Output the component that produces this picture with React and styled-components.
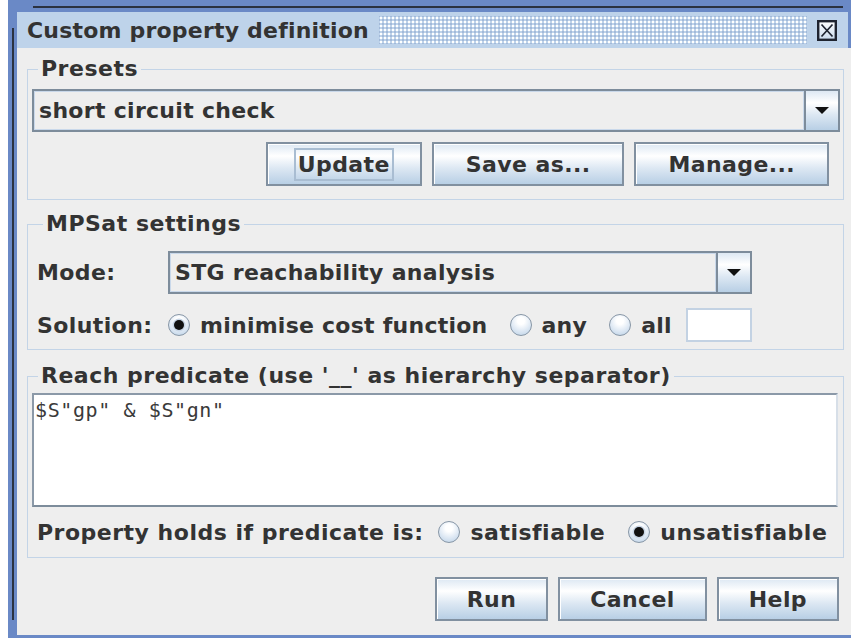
import React from 'react';
import styled, { createGlobalStyle } from 'styled-components';

const GlobalStyle = createGlobalStyle`
  html, body {
    margin: 0;
    padding: 0;
    background: #ffffff;
    overflow: hidden;
  }
  body {
    font-family: "DejaVu Sans", "Liberation Sans", sans-serif;
    color: #333333;
  }
`;

const Desk = styled.div`
  width: 851px;
  height: 638px;
  padding-left: 8px;
  box-sizing: border-box;
  overflow: hidden;
`;

// internal frame with the Metal style blue border and its dark inner lines
const Frame = styled.div`
  position: relative;
  height: 100%;
  box-sizing: border-box;
  padding: 12px 0 3px 9px;
  background: #6a89c6;
  display: flex;
  flex-direction: column;

  &::before {
    content: '';
    position: absolute;
    left: 25px;
    right: 8px;
    top: 6px;
    height: 2px;
    background: #2b3240;
  }
  &::after {
    content: '';
    position: absolute;
    left: 4px;
    top: 28px;
    bottom: 18px;
    width: 2px;
    background: #2b3240;
  }
`;

const TitleBar = styled.div`
  height: 36px;
  margin-right: 3px;
  background: #bed3ea;
  display: flex;
  align-items: center;
  padding: 0 11px 0 10px;
`;

const Title = styled.span`
  font-weight: bold;
  font-size: 22px;
  letter-spacing: 0.2px;
  white-space: nowrap;
`;

const Bumps = styled.div`
  flex: 1;
  height: 28px;
  margin: 0 10px;
  background-image:
    radial-gradient(circle, #ffffff 0.8px, transparent 1.3px),
    radial-gradient(circle, #a2b9d9 0.8px, transparent 1.3px);
  background-size: 4px 4px, 4px 4px;
  background-position: 0 0, 2px 2px;
`;

const CloseButton = styled.svg`
  width: 20px;
  height: 21px;
  flex: none;
`;

const Content = styled.div`
  flex: 1;
  background: #eeeeee;
  padding: 9px 7px 0 10px;
  display: flex;
  flex-direction: column;
`;

const Group = styled.fieldset`
  margin: ${(p) => p.$top || 0}px 0 0 0;
  border: 1px solid #c3d4e7;
  padding: ${(p) => p.$pad};
  min-width: 0;
`;

const Legend = styled.legend`
  font-weight: bold;
  font-size: 22px;
  line-height: 24px;
  letter-spacing: 0.5px;
  padding: 0 3px;
  margin-left: 6px;
`;

const Combo = styled.div`
  display: flex;
  height: 43px;
  width: ${(p) => p.$width || 'auto'};
  box-sizing: border-box;
  border: 2px solid #7d8c9b;
  background: #eeeeee;
`;

const ComboValue = styled.div`
  flex: 1;
  display: flex;
  align-items: center;
  padding-left: 4px;
  border: 1px solid #c9d8ea;
  font-weight: bold;
  font-size: 22px;
  letter-spacing: 0.3px;
`;

const ArrowButton = styled.div`
  width: 32px;
  display: flex;
  align-items: center;
  justify-content: center;
  border-left: 2px solid #7d8c9b;
  background: linear-gradient(#dde8f3 0%, #ffffff 30%, #dde8f3 60%, #b8cfe5 100%);

  &::after {
    content: '';
    border-left: 7px solid transparent;
    border-right: 7px solid transparent;
    border-top: 7px solid #111111;
  }
`;

const ButtonRow = styled.div`
  display: flex;
  justify-content: flex-end;
  gap: 10px;
  margin: ${(p) => p.$margin};
`;

const Button = styled.button`
  height: 44px;
  padding: 0 ${(p) => p.$pad || 30}px;
  border: 2px solid #8190a0;
  box-shadow: inset 1px 1px 0 #ffffff;
  background: linear-gradient(#dde8f3 0%, #ffffff 30%, #dde8f3 60%, #b8cfe5 100%);
  font-family: "DejaVu Sans", sans-serif;
  font-weight: bold;
  font-size: 22px;
  letter-spacing: 0.4px;
  color: #333333;
  display: flex;
  align-items: center;
  justify-content: center;
`;

const FocusRing = styled.span`
  padding: 2px 2px;
  outline: 2px solid #a9bdd2;
  outline-offset: 0;
`;

const SettingsGrid = styled.div`
  display: grid;
  grid-template-columns: 131px 584px;
  row-gap: 14px;
  align-items: center;
`;

const Label = styled.span`
  font-weight: bold;
  font-size: 22px;
  letter-spacing: ${(p) => p.$spacing || 0.4}px;
  white-space: nowrap;
`;

const OptionLine = styled.div`
  display: flex;
  align-items: center;
  height: 34px;
  gap: ${(p) => p.$gap || 22}px;
  margin: ${(p) => p.$margin || 0};
`;

const Radio = styled.label`
  display: flex;
  align-items: center;
  gap: 10px;
  font-weight: bold;
  font-size: 22px;
  letter-spacing: ${(p) => p.$spacing || 0.4}px;
  white-space: nowrap;
  margin-left: ${(p) => p.$shift || 0}px;
`;

const RadioMark = styled.span`
  width: 22px;
  height: 22px;
  box-sizing: border-box;
  border-radius: 50%;
  border: 1.5px solid #8796a6;
  background: radial-gradient(circle at 50% 30%, #ffffff 20%, #dce7f3 60%, #b8cfe5 100%);
  display: flex;
  align-items: center;
  justify-content: center;

  &::after {
    content: '';
    display: ${(p) => (p.$on ? 'block' : 'none')};
    width: 10px;
    height: 10px;
    border-radius: 50%;
    background: #111111;
    box-shadow: 0 0 0 1.5px #c8d6e6;
  }
`;

const SmallField = styled.div`
  flex: none;
  width: 66px;
  height: 34px;
  box-sizing: border-box;
  margin-left: -8px;
  background: #ffffff;
  border: 2px solid #c3d2e3;
`;

const Editor = styled.div`
  height: 114px;
  box-sizing: border-box;
  background: #ffffff;
  border: 2px solid #8b99a8;
  border-right-color: #d7dfe8;
  border-bottom-color: #7d8c9b;
  padding: 3px 1px;
  font-family: "DejaVu Sans Mono", "Liberation Mono", monospace;
  font-size: 20px;
  line-height: 24px;
  letter-spacing: 0.6px;
  color: #3a3a3a;
  white-space: pre;
`;

function RadioOption({ on, children, shift, spacing }) {
  return (
    <Radio $shift={shift} $spacing={spacing}>
      <RadioMark $on={on} />
      {children}
    </Radio>
  );
}

export default function App() {
  return (
    <Desk>
      <GlobalStyle />
      <Frame>
        <TitleBar>
          <Title>Custom property definition</Title>
          <Bumps />
          <CloseButton viewBox="0 0 20 21">
            <defs>
              <linearGradient id="closeFill" x1="0" y1="0" x2="0" y2="1">
                <stop offset="0" stopColor="#ffffff" />
                <stop offset="1" stopColor="#c9daec" />
              </linearGradient>
            </defs>
            <rect x="1.2" y="1.2" width="17.6" height="18.6" fill="url(#closeFill)" stroke="#1f2430" strokeWidth="2.4" />
            <path d="M4.5 4.5 L15.5 16.5 M15.5 4.5 L4.5 16.5" stroke="#1f2430" strokeWidth="1.7" />
          </CloseButton>
        </TitleBar>

        <Content>
          <Group $pad="8px 3px 13px 4px">
            <Legend>Presets</Legend>
            <Combo>
              <ComboValue>short circuit check</ComboValue>
              <ArrowButton />
            </Combo>
            <ButtonRow $margin="10px 11px 0 0">
              <Button $pad={28}>
                <FocusRing>Update</FocusRing>
              </Button>
              <Button $pad={32}>Save as...</Button>
              <Button $pad={32}>Manage...</Button>
            </ButtonRow>
          </Group>

          <Group $top={12} $pad="15px 3px 7px 9px">
            <Legend>MPSat settings</Legend>
            <SettingsGrid>
              <Label>Mode:</Label>
              <Combo $width="584px">
                <ComboValue>STG reachability analysis</ComboValue>
                <ArrowButton />
              </Combo>
              <Label>Solution:</Label>
              <OptionLine>
                <RadioOption on spacing={0.25}>minimise cost function</RadioOption>
                <RadioOption spacing={0.25}>any</RadioOption>
                <RadioOption spacing={0.25}>all</RadioOption>
                <SmallField />
              </OptionLine>
            </SettingsGrid>
          </Group>

          <Group $top={14} $pad="5px 5px 8px 4px">
            <Legend>Reach predicate (use '__' as hierarchy separator)</Legend>
            <Editor>{'$S"gp" & $S"gn"'}</Editor>
            <OptionLine $margin="8px 0 0 5px" $gap={15}>
              <Label $spacing={0.5}>Property holds if predicate is:</Label>
              <RadioOption spacing={0.5}>satisfiable</RadioOption>
              <RadioOption on shift={8} spacing={0.5}>unsatisfiable</RadioOption>
            </OptionLine>
          </Group>

          <ButtonRow $margin="19px 5px 0 0">
            <Button>Run</Button>
            <Button>Cancel</Button>
            <Button>Help</Button>
          </ButtonRow>
        </Content>
      </Frame>
    </Desk>
  );
}
